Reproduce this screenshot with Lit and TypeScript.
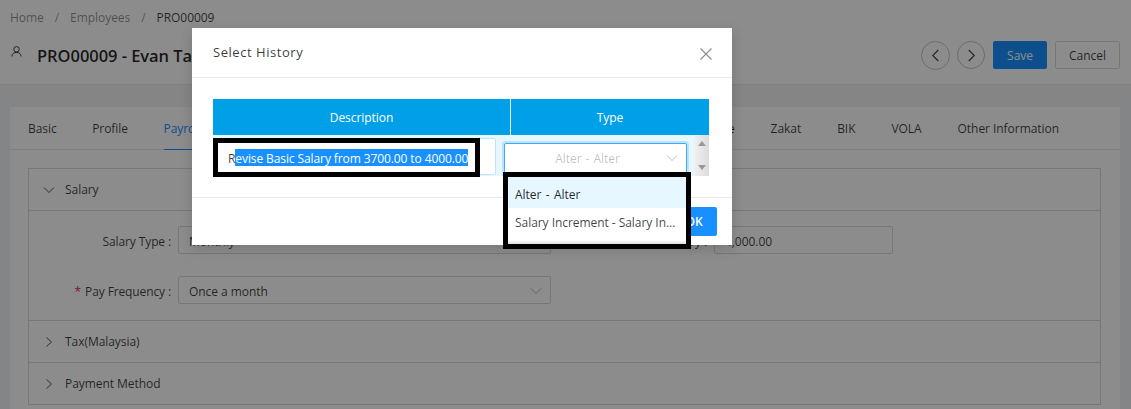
import { LitElement, html, css } from "lit";
import { customElement } from "lit/decorators.js";

const chevDown = html`<svg viewBox="0 0 12 12" width="12" height="12" fill="none" stroke="currentColor" stroke-width="1"><path d="M1 3.5 6 8.5 11 3.5"/></svg>`;
const chevRight = html`<svg viewBox="0 0 12 12" width="12" height="12" fill="none" stroke="currentColor" stroke-width="1"><path d="M3.5 1.5 8.5 6 3.5 10.5"/></svg>`;

@customElement("app-root")
export class AppRoot extends LitElement {
  static styles = css`
    :host { display: block; position: relative; width: 1131px; height: 409px; overflow: hidden;
      font-family: "Open Sans", "Noto Sans", sans-serif; font-size: 12px; letter-spacing: -.05px; color: rgba(0,0,0,.65); background: #f0f2f5; }
    .top { background: #fff; height: 85px; box-sizing: border-box; border-bottom: 1px solid #e8e8e8; }
    .crumbs { height: 34px; display: flex; align-items: center; padding-left: 10px; gap: 11px; color: rgba(0,0,0,.45); }
    .crumbs b { font-weight: 400; color: rgba(0,0,0,.75); }
    .head { display: flex; align-items: center; height: 42px; padding: 0 11px 0 11px; }
    .head .user { color: rgba(0,0,0,.8); margin-top: -7px; display: flex; }
    .head h1 { margin: 0 0 0 15px; font-size: 16.5px; font-weight: 600; color: rgba(0,0,0,.85); flex: 1; }
    .circle { width: 28px; height: 28px; border: 1px solid #c4c4c4; box-sizing: border-box; border-radius: 50%; display: flex; align-items: center; justify-content: center; margin-right: 8px; color: rgba(0,0,0,.75); }
    .circle.c1 { width: 29px; height: 29px; margin-right: 7px; }
    .btn { height: 28px; box-sizing: border-box; border-radius: 2px; display: flex; align-items: center; justify-content: center; }
    .save { width: 54px; background: #1890ff; color: #fff; margin-right: 8px; }
    .cancel { width: 65px; border: 1px solid #d9d9d9; color: rgba(0,0,0,.75); }
    .body { padding: 22px 11px 0 10px; }
    .card { background: #fff; height: 320px; }
    .tabs { height: 43px; box-sizing: border-box; border-bottom: 1px solid #e8e8e8; display: flex; justify-content: space-between; padding: 0 61px 0 18px; color: rgba(0,0,0,.75); }
    .tabs > div { display: flex; gap: 35.5px; }
    .tabs > .rt { gap: 36px; }
    .tab { display: flex; align-items: center; height: 43px; box-sizing: border-box; }
    .tab.on { color: #1890ff; border-bottom: 1px solid #1890ff; }
    .panel { margin: 18px 19px 0 18px; border: 1px solid #d9d9d9; border-bottom: 0; }
    .ph { height: 41px; display: flex; align-items: center; gap: 10px; padding-left: 14px; border-bottom: 1px solid #d9d9d9; color: rgba(0,0,0,.75); }
    .ph .ic { display: flex; color: rgba(0,0,0,.65); }
    .form { height: 110px; box-sizing: border-box; border-bottom: 1px solid #d9d9d9; padding-top: 15px;
      display: grid; grid-template-columns: 142px 373px 149px 179px; column-gap: 7px; row-gap: 22px; grid-auto-rows: 28px; }
    .lbl { display: flex; align-items: center; justify-content: flex-end; padding-top: 2px; box-sizing: border-box; color: rgba(0,0,0,.75); letter-spacing: -.12px; }
    .req { color: #f5222d; margin-right: 4px; }
    .field { border: 1px solid #d9d9d9; box-sizing: border-box; border-radius: 2px; display: flex; align-items: center; justify-content: space-between; padding: 2px 8px 0 10px; color: rgba(0,0,0,.75); }
    .field .ic { display: flex; color: rgba(0,0,0,.3); }

    .mask { position: absolute; inset: 0; background: rgba(0,0,0,.45); }
    .modal { position: absolute; left: 192px; top: 28px; width: 540px; height: 217px; background: #fff; box-shadow: 0 4px 12px rgba(0,0,0,.15); }
    .mh { height: 50px; box-sizing: border-box; border-bottom: 1px solid #e8e8e8; display: flex; align-items: center; justify-content: space-between; padding: 0 20px 2px 21px; }
    .mh .t { font-size: 13px; font-weight: 500; letter-spacing: .55px; color: rgba(0,0,0,.78); }
    .mh .x { display: flex; color: rgba(0,0,0,.45); margin-top: 5px; }
    .mb { height: 120px; box-sizing: border-box; border-bottom: 1px solid #e8e8e8; padding: 21px 23px 0 21px; }
    .thead { display: grid; grid-template-columns: 297px 1fr; height: 36px; background: #00a0e9; color: #fff; font-weight: 500; }
    .thead div { display: flex; align-items: center; justify-content: center; }
    .thead div + div { border-left: 1px solid #fff; }
    .trow { height: 41px; background: #e6f7ff; display: flex; position: relative; }
    .cell1 { width: 291px; box-sizing: border-box; margin: 3px 0 0 0; }
    .inp1 { margin-left: 4px; width: 279px; height: 37px; background: #fff; border: 1px solid #bfe3ff; border-radius: 2px; box-sizing: border-box; }
    .sel { position: absolute; left: 291px; top: 8px; width: 183px; height: 33px; box-sizing: border-box; background: #fff; border: 1px solid #40a9ff; border-radius: 2px; box-shadow: 0 0 0 2px rgba(24,144,255,.2); display: flex; align-items: center; padding: 0 8px 3px 0; color: rgba(0,0,0,.25); }
    .sel span { flex: 1; text-align: center; padding-left: 4px; word-spacing: 1px; }
    .sel .ic { display: flex; }
    .sb { position: absolute; right: 0; top: 0; bottom: 0; width: 15px; background: linear-gradient(90deg, #f0f0f0, #dcdcdc); display: flex; flex-direction: column; align-items: center; justify-content: space-between; padding: 6px 0; box-sizing: border-box; }
    .ar-u { width: 0; height: 0; border: 4px solid transparent; border-bottom: 5px solid #999; border-top: 0; }
    .ar-d { width: 0; height: 0; border: 4px solid transparent; border-top: 5px solid #999; border-bottom: 0; }
    .mf { display: flex; justify-content: flex-end; padding: 9px 15px 0 0; }
    .ok { width: 46px; height: 29px; background: #1890ff; color: #fff; border-radius: 2px; display: flex; align-items: center; justify-content: center; font-weight: 600; }

    .ann { position: absolute; border: 5px solid #000; box-sizing: border-box; background: #fff; }
    .ann1 { left: 213px; top: 138px; width: 267px; height: 39px; display: flex; align-items: center; padding-left: 10px; white-space: nowrap; color: rgba(0,0,0,.75); }
    .mark { background: #1890ff; color: #fff; display: inline-block; line-height: 15px; padding-top: 2px; letter-spacing: -.1px; }
    .ann2 { left: 503px; top: 172px; width: 188px; height: 77px; color: rgba(0,0,0,.75); }
    .opt { height: 31px; box-sizing: border-box; display: flex; align-items: center; padding-left: 7px; white-space: nowrap; }
    .opt.h { background: #e6f7ff; color: rgba(0,0,0,.85); padding-top: 3px; word-spacing: 1.4px; }
    .opt + .opt { height: 32px; padding-bottom: 4px; }
    .shade { height: 4px; background: linear-gradient(#fff, #ddd); }
  `;

  render() {
    return html`
      <div class="top">
        <div class="crumbs"><span>Home</span><span>/</span><span>Employees</span><span>/</span><b>PRO00009</b></div>
        <div class="head">
          <span class="user"><svg viewBox="0 0 12 12" width="11" height="11" fill="none" stroke="currentColor" stroke-width="1"><circle cx="6" cy="3.6" r="3"/><path d="M1 11.5C1 8.6 3 7 6 7s5 1.6 5 4.5"/></svg></span>
          <h1>PRO00009 - Evan Tan</h1>
          <div class="circle c1"><svg viewBox="0 0 12 14" width="11" height="13" fill="none" stroke="currentColor" stroke-width="1.2"><path d="M9 1 3 7 9 13"/></svg></div>
          <div class="circle"><svg viewBox="0 0 12 14" width="11" height="13" fill="none" stroke="currentColor" stroke-width="1.2"><path d="M3 1 9 7 3 13"/></svg></div>
          <div class="btn save">Save</div>
          <div class="btn cancel">Cancel</div>
        </div>
      </div>
      <div class="body">
        <div class="card">
          <div class="tabs">
            <div><span class="tab">Basic</span><span class="tab">Profile</span><span class="tab on">Payroll</span></div>
            <div class="rt"><span class="tab">Insurance</span><span class="tab">Zakat</span><span class="tab">BIK</span><span class="tab">VOLA</span><span class="tab">Other Information</span></div>
          </div>
          <div class="panel">
            <div class="ph"><span class="ic">${chevDown}</span>Salary</div>
            <div class="form">
              <div class="lbl">Salary Type :</div><div class="field">Monthly</div>
              <div class="lbl">Basic Salary :</div><div class="field">4,000.00</div>
              <div class="lbl"><span class="req">*</span>Pay Frequency :</div><div class="field">Once a month<span class="ic">${chevDown}</span></div>
            </div>
            <div class="ph"><span class="ic">${chevRight}</span>Tax(Malaysia)</div>
            <div class="ph"><span class="ic">${chevRight}</span>Payment Method</div>
          </div>
        </div>
      </div>
      <div class="mask"></div>
      <div class="modal">
        <div class="mh"><span class="t">Select History</span><span class="x"><svg viewBox="0 0 12 12" width="12" height="12" fill="none" stroke="currentColor" stroke-width="1.1"><path d="M.5.5l11 11M11.5.5l-11 11"/></svg></span></div>
        <div class="mb">
          <div class="thead"><div>Description</div><div>Type</div></div>
          <div class="trow">
            <div class="cell1"><div class="inp1"></div></div>
            <div class="sel"><span>Alter - Alter</span><i class="ic">${chevDown}</i></div>
            <div class="sb"><i class="ar-u"></i><i class="ar-d"></i></div>
          </div>
        </div>
        <div class="mf"><div class="ok">OK</div></div>
      </div>
      <div class="ann ann1"><div>R<span class="mark">evise Basic Salary from 3700.00 to 4000.00</span></div></div>
      <div class="ann ann2">
        <div class="opt h">Alter - Alter</div>
        <div class="opt">Salary Increment - Salary In...</div>
        <div class="shade"></div>
      </div>
    `;
  }
}
